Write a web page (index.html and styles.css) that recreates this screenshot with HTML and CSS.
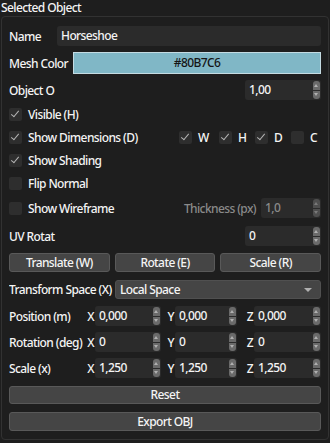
FILE: index.html
```html
<!DOCTYPE html>
<html lang="en">
<head>
  <meta charset="UTF-8" />
  <meta name="viewport" content="width=device-width, initial-scale=1.0" />
  <title>Selected Object</title>
  <link rel="stylesheet" href="styles.css">
</head>
<body>
  <div class="title">Selected Object</div>

  <div class="panel">
    <div class="row first">
      <span class="lbl lbl-name">Name</span>
      <div class="field">Horseshoe</div>
    </div>

    <div class="row color-row">
      <span class="lbl lbl-color">Mesh Color</span>
      <div class="swatch">#80B7C6</div>
    </div>

    <div class="row">
      <span class="lbl">Object O</span>
      <div class="field num">1,00<span class="spin"><i class="up"></i><i class="down"></i></span></div>
    </div>

    <div class="row check-row">
      <span class="box on"></span><span class="ck-text">Visible (H)</span>
    </div>

    <div class="row check-row">
      <span class="box on"></span><span class="ck-text">Show Dimensions (D)</span>
      <div class="dims">
        <span class="box on"></span><span class="dim dim-w">W</span>
        <span class="box on"></span><span class="dim">H</span>
        <span class="box on"></span><span class="dim">D</span>
        <span class="box"></span><span class="dim dim-c">C</span>
      </div>
    </div>

    <div class="row check-row">
      <span class="box on"></span><span class="ck-text">Show Shading</span>
    </div>

    <div class="row check-row">
      <span class="box"></span><span class="ck-text">Flip Normal</span>
    </div>

    <div class="row wire-row">
      <span class="box"></span><span class="ck-text">Show Wireframe</span>
      <span class="muted">Thickness (px)</span>
      <div class="field thick">1,0<span class="spin dim-spin"><i class="up"></i><i class="down"></i></span></div>
    </div>

    <div class="row uv-row">
      <span class="lbl">UV Rotat</span>
      <div class="field num">0<span class="spin"><i class="up"></i><i class="down"></i></span></div>
    </div>

    <div class="row btn-row">
      <button class="btn">Translate (W)</button>
      <button class="btn">Rotate (E)</button>
      <button class="btn">Scale (R)</button>
    </div>

    <div class="row space-row">
      <span class="lbl lbl-space">Transform Space (X)</span>
      <div class="select">Local Space<span class="caret"></span></div>
    </div>

    <div class="row vec-row">
      <span class="lbl">Position (m)</span>
      <span class="axis">X</span><div class="field">0,000<span class="spin"><i class="up"></i><i class="down"></i></span></div>
      <span class="axis">Y</span><div class="field">0,000<span class="spin"><i class="up"></i><i class="down"></i></span></div>
      <span class="axis">Z</span><div class="field">0,000<span class="spin"><i class="up"></i><i class="down"></i></span></div>
    </div>

    <div class="row vec-row">
      <span class="lbl">Rotation (deg)</span>
      <span class="axis">X</span><div class="field">0<span class="spin"><i class="up"></i><i class="down"></i></span></div>
      <span class="axis">Y</span><div class="field">0<span class="spin"><i class="up"></i><i class="down"></i></span></div>
      <span class="axis">Z</span><div class="field">0<span class="spin"><i class="up"></i><i class="down"></i></span></div>
    </div>

    <div class="row vec-row">
      <span class="lbl">Scale (x)</span>
      <span class="axis">X</span><div class="field">1,250<span class="spin"><i class="up"></i><i class="down"></i></span></div>
      <span class="axis">Y</span><div class="field">1,250<span class="spin"><i class="up"></i><i class="down"></i></span></div>
      <span class="axis">Z</span><div class="field">1,250<span class="spin"><i class="up"></i><i class="down"></i></span></div>
    </div>

    <button class="btn wide reset">Reset</button>
    <button class="btn wide export">Export OBJ</button>
  </div>
</body>
</html>
```

FILE: styles.css
```css
/* Painel estilo editor escuro */
body {
  margin: 0;
  background-color: #1e1e1e;
  color: #f4f4f4;
  font-family: "Noto Sans", "DejaVu Sans", sans-serif;
  font-size: 12px;
  font-weight: 500;
  letter-spacing: -0.6px;
  width: 330px;
  height: 443px;
  overflow: hidden;
}

.title {
  height: 16px;
  line-height: 15px;
  padding-left: 1px;
}

.panel {
  margin: 0 1px;
  height: 424px;
  box-sizing: border-box;
  border: 1px solid #323232;
  border-radius: 4px;
  padding: 0 7px 0 7px;
  display: flex;
  flex-direction: column;
}

/* Linhas */
.row {
  display: flex;
  align-items: center;
  height: 20px;
  margin-top: 6px;
  white-space: nowrap;
}
.row.first {
  margin-top: 9px;
}
.color-row {
  height: 22px;
}

.lbl {
  flex: 1;
  overflow: hidden;
}
.lbl-name {
  flex: 0 0 48px;
}
.lbl-color {
  flex: 0 0 64px;
}

.field {
  position: relative;
  flex: 1;
  height: 20px;
  line-height: 20px;
  padding-left: 4px;
  box-sizing: border-box;
  background-color: #2b2b2b;
  border-radius: 3px;
  overflow: hidden;
}
.field.num {
  flex: 0 0 76px;
}

.swatch {
  flex: 1;
  height: 22px;
  line-height: 20px;
  box-sizing: border-box;
  border: 1px solid #c4dbe2;
  background-color: #80b7c6;
  color: #151515;
  text-align: center;
}

/* Botões de incremento */
.spin {
  position: absolute;
  right: 1px;
  top: 1px;
  bottom: 1px;
  width: 7px;
  display: flex;
  flex-direction: column;
  gap: 1px;
}
.spin i {
  flex: 1;
  position: relative;
  background-color: #6a6a6a;
}
.spin .up {
  border-radius: 3px 3px 0 0;
}
.spin .down {
  border-radius: 0 0 3px 3px;
}
.spin .up::after,
.spin .down::after {
  content: "";
  position: absolute;
  left: 1px;
  border-left: 2.5px solid transparent;
  border-right: 2.5px solid transparent;
}
.spin .up::after {
  top: 3px;
  border-bottom: 3px solid #b0b0b0;
}
.spin .down::after {
  bottom: 3px;
  border-top: 3px solid #b0b0b0;
}

/* Caixas de seleção */
.check-row {
  height: 17px;
}
.box {
  position: relative;
  flex: 0 0 13px;
  height: 13px;
  background-color: #2e2e2e;
  border-radius: 2px;
}
.box.on::after {
  content: "";
  position: absolute;
  left: 4px;
  top: 1px;
  width: 3px;
  height: 7px;
  border-right: 1.5px solid #b4b4b4;
  border-bottom: 1.5px solid #b4b4b4;
  transform: rotate(40deg);
}
.ck-text {
  margin-left: 6px;
}

.dims {
  display: flex;
  align-items: center;
  margin-left: auto;
}
.dim {
  width: 23px;
  padding-left: 6px;
  box-sizing: border-box;
}
.dim-w {
  width: 27px;
}
.dim-c {
  width: 17px;
}

.wire-row .ck-text {
  flex: 1;
}
.muted {
  color: #8a8a8a;
  margin-right: 5px;
}
.field.thick {
  flex: 0 0 60px;
  color: #8a8a8a;
}
.dim-spin i {
  background-color: #4e4e4e;
}
.dim-spin .up::after {
  border-bottom-color: #7a7a7a;
}
.dim-spin .down::after {
  border-top-color: #7a7a7a;
}

.uv-row {
  margin-top: 8px;
}

/* Botões */
.btn {
  font-family: inherit;
  font-size: 12px;
  font-weight: 500;
  letter-spacing: -0.6px;
  color: #f4f4f4;
  background-color: #454545;
  border: 1px solid #595959;
  border-radius: 3px;
  padding: 0;
  height: 19px;
  line-height: 16px;
}
.btn-row {
  height: 19px;
  margin-top: 7px;
  display: grid;
  grid-template-columns: 1fr 1fr 1fr;
  gap: 5px;
}
.btn-row .btn {
  width: 100%;
}

.space-row {
  height: 19px;
  margin-top: 8px;
}
.lbl-space {
  flex: 0 0 106px;
}
.select {
  position: relative;
  flex: 1;
  height: 19px;
  line-height: 17px;
  padding-left: 4px;
  box-sizing: border-box;
  background-color: #454545;
  border: 1px solid #505050;
  border-radius: 3px;
}
.caret {
  position: absolute;
  right: 8px;
  top: 7px;
  border-left: 4px solid transparent;
  border-right: 4px solid transparent;
  border-top: 4px solid #b0b0b0;
}

/* Vetores */
.vec-row {
  display: grid;
  grid-template-columns: 75px 11px 66px 14px 62px 17px 1fr;
  margin-top: 7px;
}
.vec-row + .vec-row {
  margin-top: 6px;
}
.axis {
  text-align: right;
  padding-right: 1px;
}

.wide {
  width: 100%;
  height: 18px;
}
.reset {
  margin-top: 8px;
}
.export {
  margin-top: 8px;
  height: 19px;
}
```
